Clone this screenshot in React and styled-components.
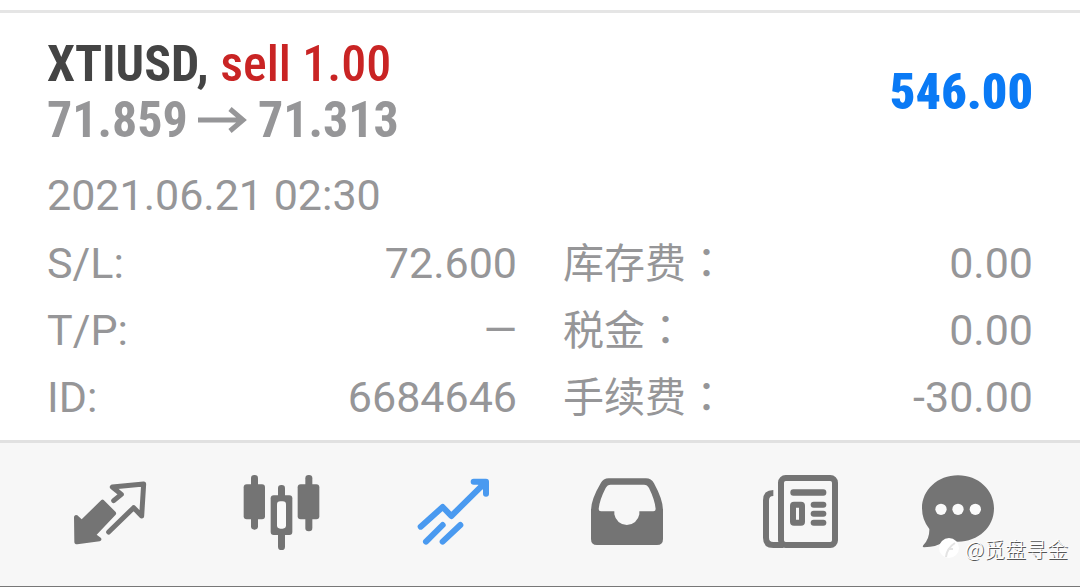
import React, { useState } from "react";
import styled, { createGlobalStyle } from "styled-components";

const details = [
    { name: "S/L:", value: "72.600", feeName: "库存费", fee: "0.00" },
    { name: "T/P:", value: "—", feeName: "税金", fee: "0.00" },
    { name: "ID:", value: "6684646", feeName: "手续费", fee: "-30.00" },
];

const QuotesIcon = () => (
    <Icon viewBox="-3 0 300 300">
        <path
            d="M131 105 L167 141 Q170 145 167 149 L110 209 L123 219 Q127 227 119 229 L52 238 Q43 238 43 230 L42 155 Q45 147 52 151 L65 163 L124 105 Q128 102 131 105 Z"
            fill="currentColor"
        />
        <path
            d="M161 107 L184 88 L157 66 L251 57 L245 153 L221 128 L146 201"
            fill="none"
            stroke="currentColor"
            strokeWidth="15"
            strokeLinejoin="round"
            strokeLinecap="round"
        />
    </Icon>
);

const ChartIcon = () => (
    <Icon viewBox="-12 0 300 300">
        <g fill="currentColor">
            <rect x="48" y="30" width="21" height="164" rx="10" />
            <rect x="26" y="58" width="64" height="105" rx="9" />
            <rect x="211" y="30" width="21" height="169" rx="10" />
            <rect x="188" y="58" width="65" height="105" rx="9" />
            <rect x="129" y="60" width="21" height="195" rx="10" />
            <rect x="107" y="91" width="65" height="119" rx="9" />
        </g>
        <rect x="126" y="109" width="27" height="82" rx="10" fill="#fafafa" />
    </Icon>
);

const TradeIcon = () => (
    <Icon viewBox="-6 0 300 300">
        <g
            fill="none"
            stroke="currentColor"
            strokeWidth="18"
            strokeLinejoin="round"
            strokeLinecap="round"
        >
            <path d="M47 185 L113 126 L139 153 L235 58" />
            <path d="M63 230 L113 180" />
            <path d="M113 230 L166 180" />
            <path d="M206 50 L243 50 L243 86" />
        </g>
        <path d="M210 48 H245 V86 Z" fill="currentColor" />
    </Icon>
);

const HistoryIcon = () => (
    <Icon viewBox="-15 0 300 300">
        <path
            fillRule="evenodd"
            d="M86 40 H198 Q214 40 222 55 Q249 104 249 136 V222 Q249 240 231 240 H51 Q33 240 33 222 V136 Q33 104 62 55 Q70 40 86 40 Z M92 59 Q82 59 77 69 Q58 106 56 132 Q56 139 63 139 H103 V148 A38 38 0 0 0 178 148 V139 H220 Q227 139 227 132 Q225 106 207 69 Q202 59 192 59 Z"
            fill="currentColor"
        />
    </Icon>
);

const NewsIcon = () => (
    <Icon viewBox="-9 0 300 300">
        <g fill="none" stroke="currentColor" strokeWidth="18">
            <rect x="93" y="39" width="162" height="201" rx="14" />
            <path d="M70 84 Q48 84 48 106 V218 Q48 240 70 240 H100" />
        </g>
        <g fill="currentColor">
            <rect x="121" y="73" width="108" height="19" rx="9" />
            <rect x="182" y="110" width="47" height="18" rx="9" />
            <rect x="182" y="137" width="47" height="18" rx="9" />
            <rect x="182" y="164" width="47" height="18" rx="9" />
        </g>
        <rect
            x="129"
            y="119"
            width="27"
            height="54"
            rx="3"
            fill="none"
            stroke="currentColor"
            strokeWidth="18"
        />
    </Icon>
);

const MessagesIcon = () => (
    <Icon viewBox="27 0 300 300">
        <path
            d="M144 31 C205 31 252 75 252 130 C252 187 205 230 144 230 Q126 230 112 226 Q80 247 42 247 Q35 246 41 239 Q59 220 58 192 Q36 165 36 130 C36 75 83 31 144 31 Z"
            fill="currentColor"
        />
        <g fill="#fafafa">
            <circle cx="93" cy="133" r="17" />
            <circle cx="144" cy="133" r="17" />
            <circle cx="196" cy="133" r="17" />
        </g>
    </Icon>
);

const tabs = [
    { id: "quotes", label: "行情", icon: QuotesIcon },
    { id: "chart", label: "图表", icon: ChartIcon },
    { id: "trade", label: "交易", icon: TradeIcon },
    { id: "history", label: "历史", icon: HistoryIcon },
    { id: "news", label: "新闻", icon: NewsIcon },
    { id: "messages", label: "消息", icon: MessagesIcon },
];

const App = () => {
    const [activeTab, setActiveTab] = useState("trade");

    return (
        <Page>
            <GlobalStyle />
            <Position>
                <Summary>
                    <div>
                        <Symbol>
                            XTIUSD, <Side>sell 1.00</Side>
                        </Symbol>
                        <Prices>
                            71.859
                            <Arrow viewBox="0 0 50 28" aria-label="to">
                                <path
                                    d="M0 14 H46 M32 3 L45 14 L32 25"
                                    fill="none"
                                    stroke="currentColor"
                                    strokeWidth="5"
                                />
                            </Arrow>
                            71.313
                        </Prices>
                    </div>
                    <Profit>546.00</Profit>
                </Summary>
                <OpenTime>2021.06.21 02:30</OpenTime>
                <Details>
                    <tbody>
                        {details.map((row) => (
                            <Row key={row.name}>
                                <Name scope="row">{row.name}</Name>
                                <Value>{row.value}</Value>
                                <FeeName scope="row">
                                    {row.feeName}
                                    <Colon>：</Colon>
                                </FeeName>
                                <Value>{row.fee}</Value>
                            </Row>
                        ))}
                    </tbody>
                </Details>
            </Position>
            <TabBar>
                {tabs.map(({ id, label, icon: TabIcon }) => (
                    <Tab
                        key={id}
                        type="button"
                        aria-label={label}
                        $active={id === activeTab}
                        onClick={() => setActiveTab(id)}
                    >
                        <TabIcon />
                    </Tab>
                ))}
                <Watermark>
                    <WatermarkLogo viewBox="0 0 20 20">
                        <circle cx="10" cy="10" r="10" fill="#ffffff" />
                        <path
                            d="M7 19 Q8 10 16 5 M9 11 H14"
                            fill="none"
                            stroke="#e4e4e4"
                            strokeWidth="2"
                        />
                    </WatermarkLogo>
                    @觅盘寻金
                </Watermark>
            </TabBar>
        </Page>
    );
};
export default App;

const GlobalStyle = createGlobalStyle`
    * {
        box-sizing: border-box;
    }
    body {
        margin: 0;
        background: #ffffff;
        font-family: Roboto, "Noto Sans CJK SC", sans-serif;
    }
`;

const Page = styled.div`
    display: flex;
    flex-direction: column;
    min-height: 100vh;
    padding-top: 10px;
`;

const Position = styled.main`
    flex: 1;
    padding: 23px 47px 8px;
    border-top: 3px solid #e5e5e5;
    color: #969698;
    font-size: 43px;
`;

const Summary = styled.section`
    display: flex;
    justify-content: space-between;
    align-items: center;
    font-family: "Roboto Condensed", "Liberation Sans Narrow", Roboto, sans-serif;
    font-size: 50px;
    font-weight: 700;
    line-height: 56px;
`;

const Symbol = styled.h1`
    margin: 0;
    color: #444444;
    font-size: 50px;
    font-weight: 700;
`;

const Side = styled.span`
    color: #c92424;
    font-weight: 500;
`;

const Prices = styled.div`
    display: flex;
    align-items: center;
`;

const Arrow = styled.svg`
    width: 50px;
    height: 28px;
    margin: 0 10px;
`;

const Profit = styled.strong`
    color: #0a7af5;
`;

const OpenTime = styled.time`
    display: block;
    margin-top: 14px;
    line-height: 67px;
`;

const Details = styled.table`
    display: block;
    line-height: 67px;

    tbody {
        display: block;
    }
`;

/* two name/value pairs with a gutter between them */
const Row = styled.tr`
    display: grid;
    grid-template-columns: 1fr 1fr 46px 1fr 1fr;
    height: 67px;
    align-items: baseline;
`;

const Name = styled.th`
    padding: 0;
    text-align: left;
    font-weight: 400;
`;

const FeeName = styled(Name)`
    grid-column: 4;
    font-size: 41px;
    line-height: 70px;
    white-space: nowrap;
`;

const Colon = styled.span`
    font-family: Roboto, "Noto Sans CJK TC", sans-serif;
`;

const Value = styled.td`
    padding: 0;
    text-align: right;
`;

const TabBar = styled.nav`
    position: relative;
    display: flex;
    height: 147px;
    padding: 22px 25px 0 23px;
    border-top: 3px solid #e1e1e1;
    border-bottom: 1px solid #777777;
    background: #f7f7f7;
`;

const Tab = styled.button`
    flex: 1;
    display: flex;
    justify-content: center;
    align-items: flex-start;
    padding: 0;
    border: none;
    background: transparent;
    color: ${(props) => (props.$active ? "#4a9af0" : "#747474")};
    cursor: pointer;
`;

const Icon = styled.svg`
    width: 100px;
    height: 100px;
`;

const Watermark = styled.div`
    position: absolute;
    right: 12px;
    bottom: 24px;
    display: flex;
    align-items: center;
    gap: 6px;
    color: #ffffff;
    font-family: "Noto Sans CJK SC", sans-serif;
    font-size: 21px;
    font-weight: 300;
    line-height: 28px;
    text-shadow: 1px 1px 0 #555555;
`;

const WatermarkLogo = styled.svg`
    width: 20px;
    height: 20px;
`;
